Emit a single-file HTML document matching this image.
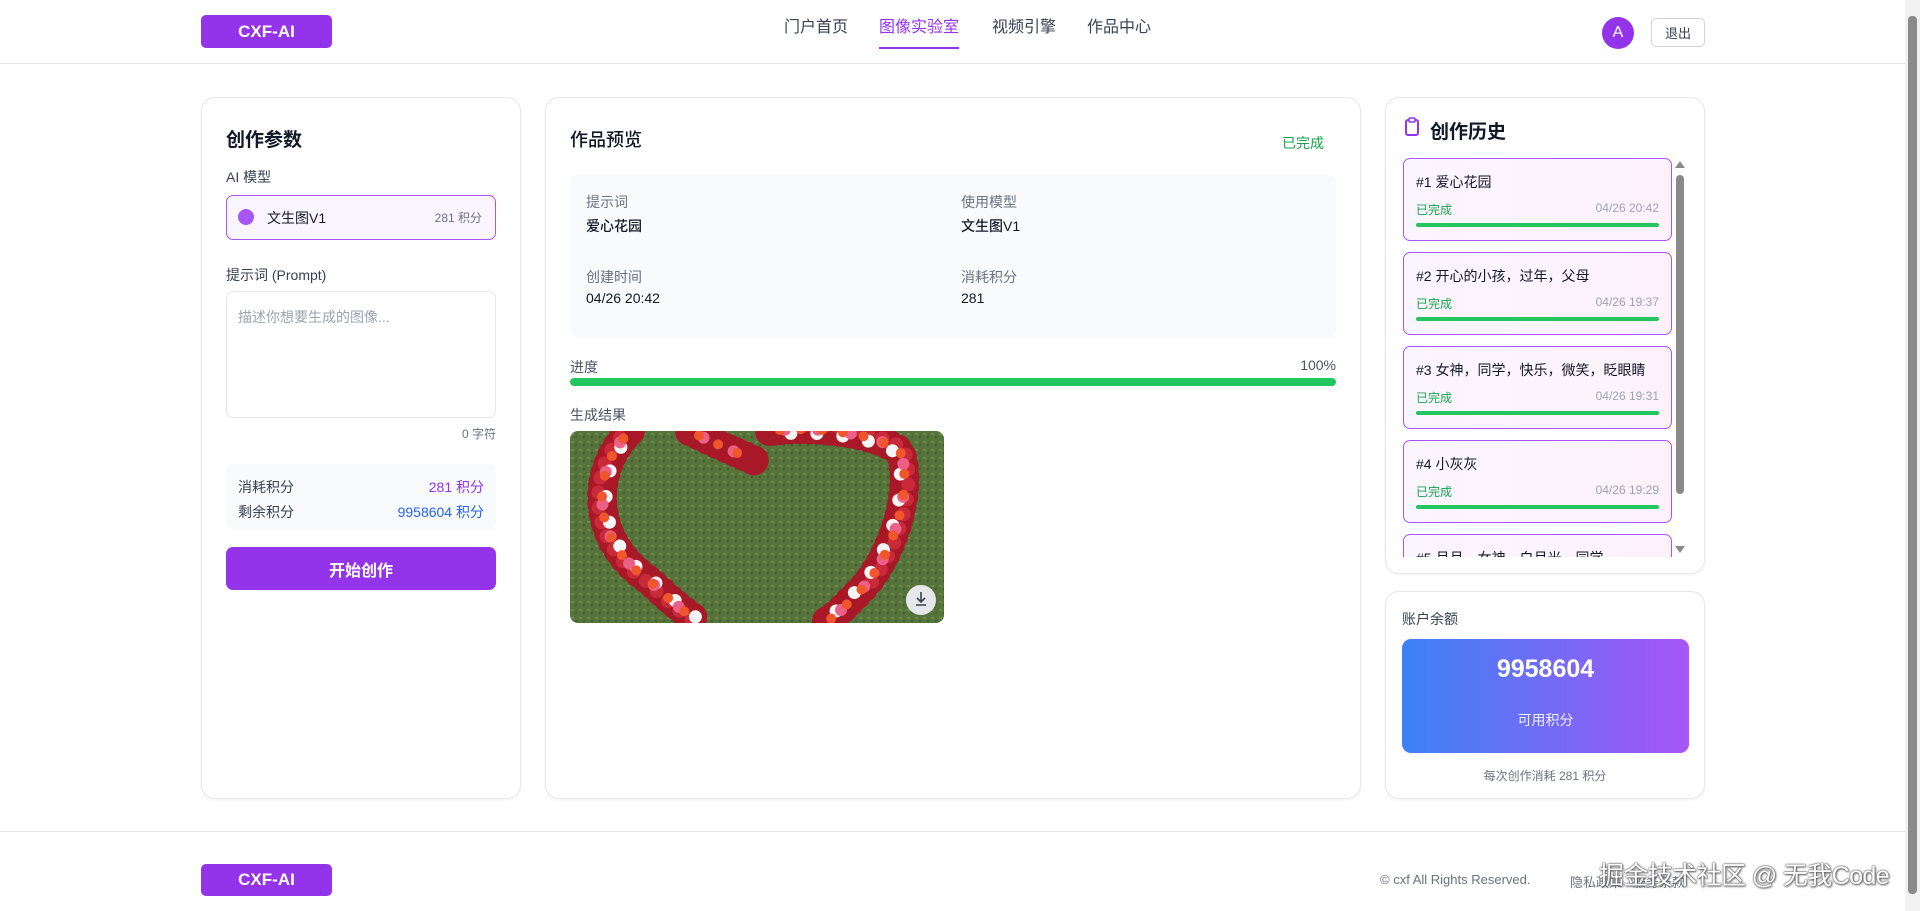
<!DOCTYPE html>
<html><head><meta charset="utf-8"><style>
*{box-sizing:border-box;margin:0;padding:0}
body{width:1920px;height:911px;overflow:hidden;background:#fff;font-family:"Liberation Sans","Noto Sans CJK SC",sans-serif;color:#111827;position:relative}
.a{position:absolute}
.logo{background:#9333ea;color:#fff;font-weight:bold;font-size:17px;border-radius:5px;display:flex;align-items:center;justify-content:center}
.nav{font-size:16px;color:#374151;top:13px;white-space:nowrap}
.card{border:1px solid #e5e7eb;border-radius:14px;background:#fff;box-shadow:0 1px 3px rgba(0,0,0,.05)}
.lbl{font-size:14px;color:#374151}
.gray{color:#6b7280}
.item{left:1403px;width:269px;height:83px;border:1.5px solid #a855f7;border-radius:7px;background:linear-gradient(90deg,#fbf5ff,#fdf2fb)}
.item .t{position:absolute;left:12px;top:13px;font-size:14px;color:#111827;white-space:nowrap}
.item .s{position:absolute;left:12px;top:42px;font-size:12px;color:#16a34a}
.item .d{position:absolute;right:12px;top:42px;font-size:12px;color:#9ca3af}
.item .b{position:absolute;left:12px;right:12px;top:64px;height:4px;background:#22c55e;border-radius:2px}
.fl{fill:none;stroke-linecap:round}
</style></head><body>
<div class="a logo" style="left:201px;top:15px;width:131px;height:33px">CXF-AI</div>
<div class="a nav" style="left:784px">门户首页</div>
<div class="a nav" style="left:879px;color:#9333ea">图像实验室</div>
<div class="a" style="left:879px;top:47px;width:80px;height:2px;background:#9333ea"></div>
<div class="a nav" style="left:992px">视频引擎</div>
<div class="a nav" style="left:1087px">作品中心</div>
<div class="a" style="left:1602px;top:17px;width:32px;height:32px;border-radius:50%;background:#9333ea;color:#fff;font-size:16px;display:flex;align-items:center;justify-content:center">A</div>
<div class="a" style="left:1651px;top:18px;width:54px;height:29px;border:1px solid #d1d5db;border-radius:5px;font-size:13px;color:#374151;display:flex;align-items:center;justify-content:center">退出</div>
<div class="a" style="left:0;top:63px;width:1905px;height:1px;background:#e5e7eb"></div>
<div class="a" style="left:1905px;top:0;width:15px;height:911px;background:#f1f1f1"></div>
<div class="a" style="left:1908px;top:16px;width:9px;height:878px;background:#8a8a8a;border-radius:4px"></div>

<div class="a card" style="left:201px;top:97px;width:320px;height:702px"></div>
<div class="a" style="left:226px;top:125px;font-size:19px;font-weight:bold">创作参数</div>
<div class="a lbl" style="left:226px;top:167px">AI 模型</div>
<div class="a" style="left:226px;top:195px;width:270px;height:45px;border:1.5px solid #a855f7;border-radius:7px;background:#faf5ff"></div>
<div class="a" style="left:238px;top:209px;width:16px;height:16px;border-radius:50%;background:#a855f7"></div>
<div class="a" style="left:267px;top:208px;font-size:14px">文生图V1</div>
<div class="a gray" style="left:420px;top:209px;width:62px;text-align:right;font-size:12px">281 积分</div>
<div class="a lbl" style="left:226px;top:265px">提示词 (Prompt)</div>
<div class="a" style="left:226px;top:291px;width:270px;height:127px;border:1px solid #e5e7eb;border-radius:7px"></div>
<div class="a" style="left:238px;top:307px;font-size:14px;color:#9ca3af">描述你想要生成的图像...</div>
<div class="a gray" style="left:420px;top:425px;width:76px;text-align:right;font-size:12px">0 字符</div>
<div class="a" style="left:226px;top:464px;width:270px;height:66px;background:#f8fafc;border-radius:7px"></div>
<div class="a lbl" style="left:238px;top:477px">消耗积分</div>
<div class="a" style="left:380px;top:477px;width:104px;text-align:right;font-size:14px;color:#9333ea">281 积分</div>
<div class="a lbl" style="left:238px;top:502px">剩余积分</div>
<div class="a" style="left:360px;top:502px;width:124px;text-align:right;font-size:14px;color:#2563eb">9958604 积分</div>
<div class="a" style="left:226px;top:547px;width:270px;height:43px;background:#9333ea;border-radius:7px;color:#fff;font-weight:bold;font-size:16px;display:flex;align-items:center;justify-content:center">开始创作</div>

<div class="a card" style="left:545px;top:97px;width:816px;height:702px"></div>
<div class="a" style="left:570px;top:126px;font-size:18px;font-weight:500">作品预览</div>
<div class="a" style="left:1280px;top:133px;width:44px;text-align:right;font-size:14px;color:#16a34a">已完成</div>
<div class="a" style="left:570px;top:175px;width:766px;height:163px;background:#f8fafc;border-radius:8px"></div>
<div class="a gray" style="left:586px;top:192px;font-size:14px">提示词</div>
<div class="a" style="left:586px;top:216px;font-size:14px;font-weight:500">爱心花园</div>
<div class="a gray" style="left:961px;top:192px;font-size:14px">使用模型</div>
<div class="a" style="left:961px;top:216px;font-size:14px;font-weight:500">文生图V1</div>
<div class="a gray" style="left:586px;top:267px;font-size:14px">创建时间</div>
<div class="a" style="left:586px;top:290px;font-size:14px;font-weight:500">04/26 20:42</div>
<div class="a gray" style="left:961px;top:267px;font-size:14px">消耗积分</div>
<div class="a" style="left:961px;top:290px;font-size:14px;font-weight:500">281</div>
<div class="a lbl" style="left:570px;top:357px;color:#4b5563">进度</div>
<div class="a lbl" style="left:1280px;top:357px;width:56px;text-align:right;color:#4b5563">100%</div>
<div class="a" style="left:570px;top:378px;width:766px;height:8px;background:#22c55e;border-radius:4px"></div>
<div class="a lbl" style="left:570px;top:405px;color:#4b5563">生成结果</div>
<svg class="a" style="left:570px;top:431px;border-radius:8px" width="374" height="192" viewBox="0 0 374 192">
<defs><pattern id="g" width="8" height="8" patternUnits="userSpaceOnUse"><rect width="8" height="8" fill="#55733a"/><rect x="1" y="2" width="3" height="2" fill="#6f8a48"/><rect x="5" y="5" width="2" height="2" fill="#42602a"/></pattern></defs>
<rect width="374" height="192" fill="url(#g)"/>
<path class="fl" d="M60 0 C20 40 20 110 80 150 C100 170 120 185 130 192 M200 0 C240 -5 300 0 330 20 C345 60 320 130 290 160 C270 180 260 192 250 192 M120 0 C150 15 175 25 185 30" stroke="#a81826" stroke-width="30" stroke-dasharray="0 10"/>
<path class="fl" d="M56 0 C16 40 16 110 76 150 C96 170 116 185 126 192 M200 -4 C240 -9 300 -4 334 18 C349 60 324 130 294 160" stroke="#c92a3a" stroke-width="14" stroke-dasharray="0 15" stroke-dashoffset="6"/>
<path class="fl" d="M64 0 C24 40 24 110 84 150 C104 170 124 185 134 192 M200 4 C240 -1 300 4 326 22 C341 60 316 130 286 160 C266 180 256 192 246 192" stroke="#f5f5f5" stroke-width="13" stroke-dasharray="0 26" stroke-dashoffset="5"/>
<path class="fl" d="M60 0 C20 40 20 110 80 150 C100 170 120 185 130 192 M200 0 C240 -5 300 0 330 20 C345 60 320 130 290 160 C270 180 260 192 250 192 M120 0 C150 15 175 25 185 30" stroke="#ec5f86" stroke-width="12" stroke-dasharray="0 33" stroke-dashoffset="18"/>
<path class="fl" d="M60 0 C20 40 20 110 80 150 C100 170 120 185 130 192 M200 0 C240 -5 300 0 330 20 C345 60 320 130 290 160 C270 180 260 192 250 192 M120 0 C150 15 175 25 185 30" stroke="#f0562c" stroke-width="10" stroke-dasharray="0 21" stroke-dashoffset="11"/>
<circle cx="351" cy="169" r="15" fill="#e5e7eb"/>
<path d="M351 161v10m-4-4 4 4 4-4m-9 7h10" stroke="#374151" stroke-width="1.6" fill="none"/>
</svg>

<div class="a card" style="left:1385px;top:97px;width:320px;height:477px"></div>
<svg class="a" style="left:1404px;top:117px" width="16" height="20" viewBox="0 0 16 20"><rect x="2" y="3" width="12" height="15" rx="2" fill="none" stroke="#9333ea" stroke-width="2"/><rect x="5" y="1" width="6" height="4" rx="1" fill="#fff" stroke="#9333ea" stroke-width="1.5"/></svg>
<div class="a" style="left:1430px;top:117px;font-size:19px;font-weight:bold">创作历史</div>
<div class="a" style="left:1403px;top:158px;width:285px;height:399px;overflow:hidden">
<div class="a item" style="left:0;top:0"><div class="t">#1 爱心花园</div><div class="s">已完成</div><div class="d">04/26 20:42</div><div class="b"></div></div>
<div class="a item" style="left:0;top:94px"><div class="t">#2 开心的小孩，过年，父母</div><div class="s">已完成</div><div class="d">04/26 19:37</div><div class="b"></div></div>
<div class="a item" style="left:0;top:188px"><div class="t">#3 女神，同学，快乐，微笑，眨眼睛</div><div class="s">已完成</div><div class="d">04/26 19:31</div><div class="b"></div></div>
<div class="a item" style="left:0;top:282px"><div class="t">#4 小灰灰</div><div class="s">已完成</div><div class="d">04/26 19:29</div><div class="b"></div></div>
<div class="a item" style="left:0;top:376px"><div class="t">#5 月月，女神，白月光，同学</div></div>
<div class="a" style="left:273px;top:17px;width:8px;height:319px;background:#8a8a8a;border-radius:4px"></div>
<div class="a" style="left:272px;top:3px;width:0;height:0;border-left:5px solid transparent;border-right:5px solid transparent;border-bottom:7px solid #8a8a8a"></div>
<div class="a" style="left:272px;top:388px;width:0;height:0;border-left:5px solid transparent;border-right:5px solid transparent;border-top:7px solid #8a8a8a"></div>
</div>

<div class="a card" style="left:1385px;top:591px;width:320px;height:208px"></div>
<div class="a lbl" style="left:1402px;top:609px">账户余额</div>
<div class="a" style="left:1402px;top:639px;width:287px;height:114px;border-radius:9px;background:linear-gradient(90deg,#3b82f6,#a855f7)"></div>
<div class="a" style="left:1402px;top:655px;width:287px;text-align:center;color:#fff;font-size:25px;font-weight:bold">9958604</div>
<div class="a" style="left:1402px;top:710px;width:287px;text-align:center;color:#eef;font-size:14px">可用积分</div>
<div class="a gray" style="left:1385px;top:767px;width:320px;text-align:center;font-size:12px">每次创作消耗 281 积分</div>

<div class="a" style="left:0;top:831px;width:1905px;height:1px;background:#e5e7eb"></div>
<div class="a logo" style="left:201px;top:864px;width:131px;height:32px">CXF-AI</div>
<div class="a gray" style="left:1380px;top:872px;font-size:13px;white-space:nowrap">© cxf All Rights Reserved.</div>
<div class="a gray" style="left:1570px;top:872px;font-size:13px;white-space:nowrap">隐私政策 &nbsp; 服务条款</div>
<div class="a" style="left:1599px;top:856px;font-size:25px;letter-spacing:-0.6px;color:#fff;white-space:nowrap;text-shadow:0 0 2px #555,0 0 1px #333,1px 1px 2px #666">掘金技术社区 @ 无我Code</div>
</body></html>
